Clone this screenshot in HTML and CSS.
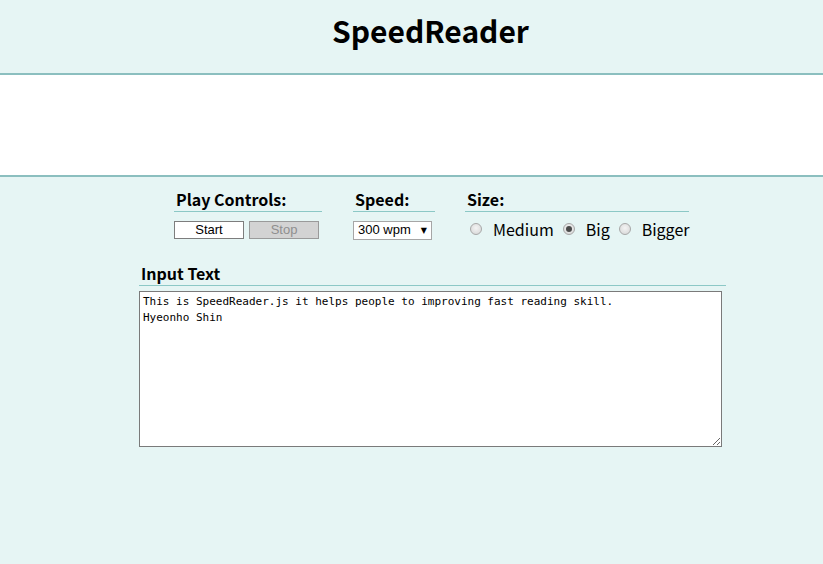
FILE: index.html
```html
<!DOCTYPE html>
<html lang="en">
<head>
<meta charset="utf-8">
<title>SpeedReader</title>
<link rel="stylesheet" href="styles.css">
</head>
<body>
<header class="top">
  <h1 class="title">SpeedReader</h1>
</header>
<div class="display"></div>
<main class="main">
  <div class="controls">
    <section class="group group-play">
      <h2 class="group-title">Play Controls:</h2>
      <div class="group-body">
        <button class="btn btn-start" type="button">Start</button>
        <button class="btn btn-stop" type="button" disabled>Stop</button>
      </div>
    </section>
    <section class="group group-speed">
      <h2 class="group-title">Speed:</h2>
      <div class="group-body">
        <div class="select-wrap">
          <select class="select">
            <option>300 wpm</option>
          </select>
        </div>
      </div>
    </section>
    <section class="group group-size">
      <h2 class="group-title">Size:</h2>
      <div class="group-body radios">
        <label class="radio"><input type="radio" name="size" class="radio-input"><span>Medium</span></label>
        <label class="radio"><input type="radio" name="size" class="radio-input" checked><span>Big</span></label>
        <label class="radio"><input type="radio" name="size" class="radio-input"><span>Bigger</span></label>
      </div>
    </section>
  </div>
  <section class="input-section">
    <h2 class="input-title">Input Text</h2>
    <textarea class="input-text" spellcheck="false">This is SpeedReader.js it helps people to improving fast reading skill.
Hyeonho Shin</textarea>
  </section>
</main>
</body>
</html>
```
FILE: styles.css
```css
html, body {
  margin: 0;
  padding: 0;
}
body {
  background: #e6f5f4;
  font-family: "Noto Sans CJK KR", "Noto Sans", sans-serif;
  color: #000;
  width: 823px;
  height: 564px;
  overflow: hidden;
}
.top {
  height: 75px;
  box-sizing: border-box;
  border-bottom: 2px solid #8bbfbf;
  display: flex;
  align-items: center;
  justify-content: center;
  padding-left: 38px;
}
.title {
  margin: 0;
  font-size: 30px;
  font-weight: 700;
  line-height: 1;
  padding-bottom: 14px;
}
.display {
  background: #fff;
  height: 100px;
  border-bottom: 2px solid #8bbfbf;
}
.main {
  margin-left: 139px;
  width: 587px;
  padding-top: 11px;
}
.controls {
  display: flex;
  margin-left: 35px;
}
.group-play { width: 148px; margin-right: 31px; }
.group-speed { width: 82px; margin-right: 30px; }
.group-size { width: 224px; }
.group-title {
  margin: 0;
  font-size: 16px;
  font-weight: 700;
  line-height: 22px;
  padding-left: 2px;
  padding-bottom: 1px;
  border-bottom: 1px solid #8cc8c6;
}
.group-body {
  display: flex;
  align-items: center;
  margin-top: 9px;
  height: 18px;
}
.btn {
  flex-shrink: 0;
  width: 70px;
  height: 18px;
  box-sizing: border-box;
  border: 1px solid #7d7d7d;
  background: #fff;
  font-family: "Liberation Sans", Arial, sans-serif;
  font-size: 13px;
  line-height: 16px;
  padding: 0;
  color: #000;
  margin: 0 5px 0 0;
}
.btn-stop {
  background: #d3d3d3;
  color: #8f8f8f;
  border-color: #9a9a9a;
  margin-right: 0;
}
.select-wrap {
  position: relative;
  width: 79px;
  height: 19px;
}
.select {
  appearance: none;
  -webkit-appearance: none;
  display: block;
  width: 79px;
  height: 19px;
  box-sizing: border-box;
  border: 1px solid #a6a6a6;
  background: #fff;
  font-family: "Liberation Sans", Arial, sans-serif;
  font-size: 13px;
  padding: 0 0 2px 4px;
  line-height: 15px;
  color: #000;
  border-radius: 0;
}
.select-wrap::after {
  content: "\25BC";
  position: absolute;
  right: 5px;
  top: 5px;
  font-size: 8px;
  line-height: 9px;
  color: #000;
  pointer-events: none;
  font-family: "DejaVu Sans", sans-serif;
}
.radios {
  padding-left: 5px;
}
.radio {
  display: flex;
  align-items: center;
  font-size: 16px;
  line-height: 18px;
  margin-right: 9px;
}
.radio span {
  position: relative;
  top: -1px;
}
.radio-input {
  appearance: none;
  -webkit-appearance: none;
  width: 12px;
  height: 12px;
  margin: 0 11px 0 0;
  border-radius: 50%;
  border: 1px solid #a8a8a8;
  background: radial-gradient(circle at 50% 40%, #f4f4f4, #d4d4d4);
  box-sizing: border-box;
  position: relative;
  top: -1px;
}
.radio-input:checked::after {
  content: "";
  position: absolute;
  left: 2px;
  top: 2px;
  width: 6px;
  height: 6px;
  border-radius: 50%;
  background: #4a4a4a;
}
.input-section {
  margin-top: 23px;
}
.input-title {
  margin: 0;
  font-size: 16px;
  font-weight: 700;
  line-height: 22px;
  padding-left: 2px;
  padding-bottom: 1px;
  border-bottom: 1px solid #8cc8c6;
}
.input-text {
  display: block;
  margin-top: 5px;
  width: 583px;
  height: 156px;
  box-sizing: border-box;
  border: 1px solid #7a7a7a;
  background: #fff;
  font-family: "DejaVu Sans Mono", "Liberation Mono", monospace;
  font-size: 11px;
  line-height: 16px;
  padding: 2px 3px 0;
  color: #000;
  resize: both;
  outline: none;
}
```
